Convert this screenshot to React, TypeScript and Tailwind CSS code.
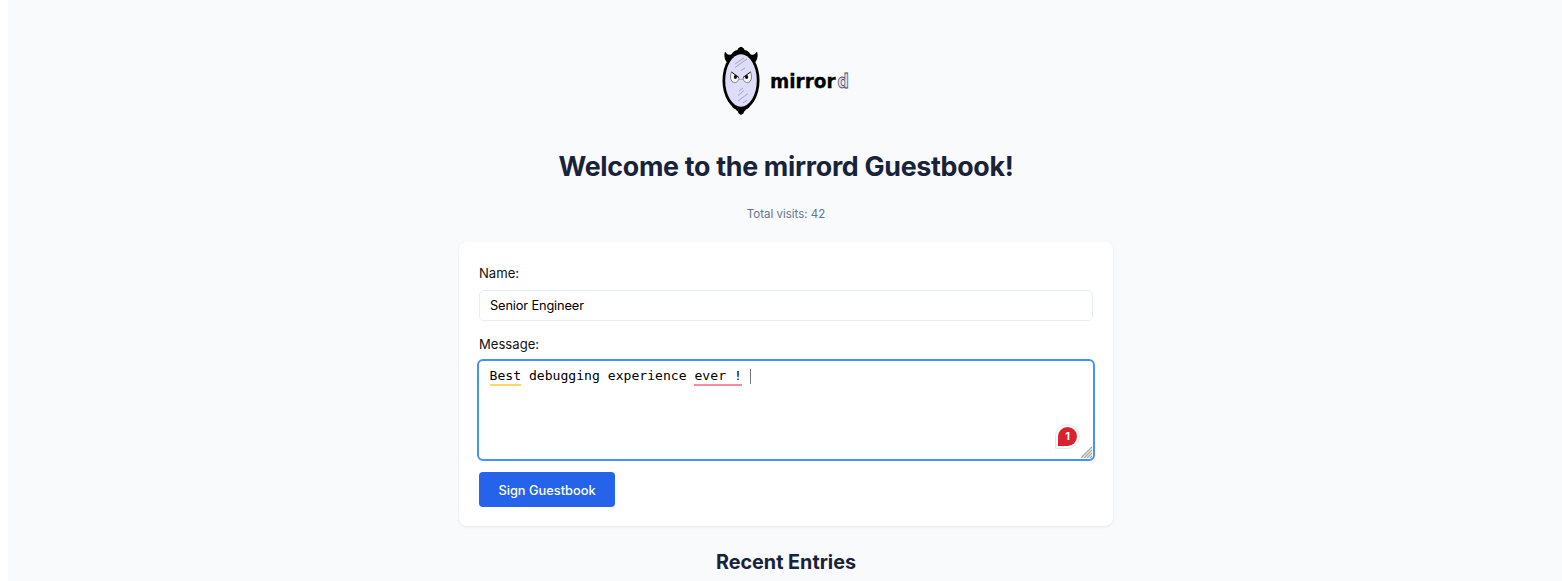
function MirrorLogo() {
  return (
    <svg width="128" height="70" viewBox="0 0 128 70" role="img" aria-label="mirrord" className="block">
      <path d="M15.500 4c0-1.500 2-2.600 3.500-3.300 1.500.7 3.500 1.800 3.500 3.300 3 .3 4.500 2 6 4.200 3 1.300 5 0 6.500-2.700 1.200 3.500.8 7-1.500 10.500H4.500c-2.300-3.500-2.700-7-1.500-10.500 1.500 2.700 3.500 4 6.500 2.700C11 6 12.500 4.300 15.500 4z" fill="#000" />
      <path d="M10 60h18c-1 3-4 2.500-5 5l-1 .5c0 2-1.500 2.500-3 3.500-1.500-1-3-1.500-3-3.500l-1-.5c-1-2.500-4-2-5-5z" fill="#000" />
      <ellipse cx="19" cy="34.500" rx="18.500" ry="29.500" fill="#000" />
      <ellipse cx="19" cy="34.500" rx="15.800" ry="26.300" fill="#deddf9" />
      <g stroke="#a09eb2" strokeWidth=".9">
        <path d="M13 18l9-6M13 21.500l12-8.500M19 24.500l4-2.500M17 45l4-3M16 49.500l6-5M16 55l10-7.500M21 57l4-3" />
      </g>
      <path d="M9.500 26c-1.500 3-1.500 7 .5 9.500 3 2.500 6.500.5 7-3.500z" fill="#f7f7f0" stroke="#6b6975" strokeWidth=".8" />
      <path d="M28.500 26c1.500 3 1.500 7-.5 9.500-3 2.500-6.500.5-7-3.500z" fill="#f7f7f0" stroke="#6b6975" strokeWidth=".8" />
      <path d="M9.500 26l7.500 5.500M28.500 26l-7.500 5.500" stroke="#222" strokeWidth="1" />
      <path d="M17.500 33.500h1M19.500 33.500h1" fill="none" stroke="#55515f" strokeWidth=".7" />
      <ellipse cx="13.400" cy="31" rx="1.600" ry="2.100" fill="#111" />
      <ellipse cx="24.600" cy="31" rx="1.600" ry="2.100" fill="#111" />
      <text x="48" y="41.500" textLength="65.500" lengthAdjust="spacingAndGlyphs" fontFamily="DejaVu Sans, sans-serif" fontWeight="700" fontSize="19.500" fill="#000" stroke="#000" strokeWidth=".3">mirror</text>
      <text x="115.500" y="41.500" textLength="11.500" lengthAdjust="spacingAndGlyphs" fontFamily="DejaVu Sans, sans-serif" fontWeight="700" fontSize="19.500" fill="#deddf9" stroke="#45434f" strokeWidth=".8">d</text>
    </svg>
  );
}

export default function App() {
  return (
    <div className="h-[581px] overflow-hidden bg-white pl-2 font-['Inter',sans-serif]">
      <div className="flex h-full flex-col items-center bg-[#f8fafc] pl-[2px]">
        <header className="flex flex-col items-center">
          <div className="mt-[46px]">
            <MirrorLogo />
          </div>
          <h1 className="mt-[30px] text-[26.800px] leading-10 font-bold tracking-[-0.300px] whitespace-nowrap text-[#18233a]">
            Welcome to the mirrord Guestbook!
          </h1>
          <p className="mt-[18px] text-[11.500px] leading-5 whitespace-nowrap text-[#64748b]">Total visits: 42</p>
        </header>
        <form className="mt-[18px] flex h-[284px] w-[654px] flex-col rounded-lg bg-white px-5 pt-[21px] shadow-[0_1px_3px_rgba(0,0,0,0.08)]" onSubmit={(e) => e.preventDefault()}>
          <label htmlFor="name" className="h-[27px] text-[13.100px] leading-[21px] text-[#111]">Name:</label>
          <input id="name" defaultValue="Senior Engineer" className="h-[31px] w-full rounded-[5px] border border-[#e8edf3] px-[10px] pb-px text-[12.800px] tracking-[-0.140px] text-black outline-none" />
          <label htmlFor="message" className="mt-[13px] h-[25px] text-[13.100px] leading-[21px] text-[#111]">Message:</label>
          <div id="message" className="relative -mr-[2px] -ml-[2px] h-[102px] rounded-md border-2 border-[#4590fa] bg-white px-[10.500px] pt-[5px] font-['DejaVu_Sans_Mono',monospace] text-[13.100px] leading-5 text-black">
            <div className="flex whitespace-pre">
              <span className="h-5 border-b-2 border-[#fcd56b]">Best</span>
              <span> debugging experience </span>
              <span className="h-5 border-b-2 border-[#f78ba3]">ever !</span>
              <span className="mt-[3px] ml-2 h-[15px] w-px bg-[#777]" />
            </div>
            <div className="absolute right-[13px] bottom-[10px] flex size-[25px] items-center justify-center rounded-full rounded-bl-none border border-[#e5e5ec] bg-white">
              <span className="flex size-[19px] items-center justify-center rounded-full rounded-bl-[2px] bg-[#d9232e] font-['Inter',sans-serif] text-[11px] leading-none font-bold text-white">1</span>
            </div>
            <svg className="absolute right-px bottom-px" width="11" height="11" viewBox="0 0 11 11" stroke="#aaa" strokeWidth="1.400">
              <path d="M0 11L11 0M3 11l8-8M6 11l5-5M9 11l2-2" />
            </svg>
          </div>
          <button className="mt-[11px] h-[35px] w-[136px] rounded bg-[#2563eb] pt-[2px] text-[12.800px] font-medium whitespace-nowrap text-white">Sign Guestbook</button>
        </form>
        <h2 className="mt-[21px] text-[19.800px] leading-[30px] font-bold whitespace-nowrap text-[#18233a]">Recent Entries</h2>
      </div>
    </div>
  );
}
